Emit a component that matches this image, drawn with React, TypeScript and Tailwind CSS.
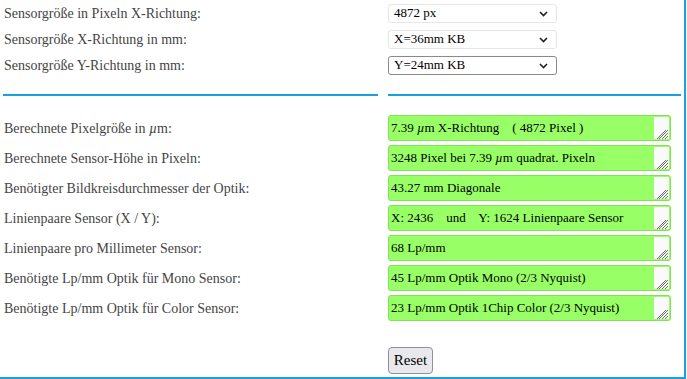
import React from 'react';

const selects = [
  { label: 'Sensorgröße in Pixeln X-Richtung:', value: '4872 px', focused: false },
  { label: 'Sensorgröße X-Richtung in mm:', value: 'X=36mm KB', focused: false },
  { label: 'Sensorgröße Y-Richtung in mm:', value: 'Y=24mm KB', focused: true },
];

const results: { label: React.ReactNode; value: React.ReactNode }[] = [
  {
    label: <>Berechnete Pixelgröße in <i>µ</i>m:</>,
    value: <>7.39 <i>µ</i>m X-Richtung    ( 4872 Pixel )</>,
  },
  {
    label: 'Berechnete Sensor-Höhe in Pixeln:',
    value: <>3248 Pixel bei 7.39 <i>µ</i>m quadrat. Pixeln</>,
  },
  { label: 'Benötigter Bildkreisdurchmesser der Optik:', value: '43.27 mm Diagonale' },
  { label: 'Linienpaare Sensor (X / Y):', value: 'X: 2436    und    Y: 1624 Linienpaare Sensor' },
  { label: 'Linienpaare pro Millimeter Sensor:', value: '68 Lp/mm' },
  { label: 'Benötigte Lp/mm Optik für Mono Sensor:', value: '45 Lp/mm Optik Mono (2/3 Nyquist)' },
  { label: 'Benötigte Lp/mm Optik für Color Sensor:', value: '23 Lp/mm Optik 1Chip Color (2/3 Nyquist)' },
];

// scrollbar track + resize handle in the textarea corner
function Grip() {
  return (
    <div className="absolute right-[1px] top-[1px] bottom-[1px] flex w-[15px] flex-col">
      <div className="flex-1 bg-[#fafafa]" />
      <svg width="15" height="10" viewBox="0 0 15 10" className="bg-[#fafafa]">
        <path d="M14 1 L5 10 M14 4 L8 10 M14 7 L11 10 M12 1 L3 10" stroke="#6b6b6b" strokeWidth="1" />
      </svg>
    </div>
  );
}

export default function App() {
  return (
    <div className="h-[379px] w-[686px] overflow-hidden border-r-2 border-b-2 border-[#1a9fe0] bg-white font-['Liberation_Serif','Times_New_Roman',serif] text-[14px] text-[#444]">
      {selects.map((s) => (
        <div key={s.value} className="flex h-[26px] items-center">
          <div className="w-[385px] pl-[4px]">{s.label}</div>
          <div className="pl-[3px]">
            <div
              className={`relative flex h-[19px] w-[169px] items-center rounded-[3px] border bg-white pl-[5px] text-[13px] text-black ${
                s.focused ? 'border-[#8a8a8a]' : 'border-[#e6e6e6]'
              }`}
            >
              {s.value}
              <svg className="absolute right-[8px] top-[6px]" width="9" height="6" viewBox="0 0 9 6">
                <path d="M1 1 L4.5 4.5 L8 1" stroke="#222" strokeWidth="1.6" fill="none" />
              </svg>
            </div>
          </div>
        </div>
      ))}

      <div className="mt-[16px] flex">
        <div className="w-[385px] pl-[3px]">
          <div className="h-[2px] w-[375px] bg-[#1a9fe0]" />
        </div>
        <div className="pl-[3px]">
          <div className="h-[2px] w-[293px] bg-[#1a9fe0]" />
        </div>
      </div>

      <div className="mt-[19px] flex flex-col gap-[4px]">
        {results.map((r, i) => (
          <div key={i} className="flex h-[26px] items-center">
            <div className="w-[385px] pl-[4px]">{r.label}</div>
            <div className="pl-[3px]">
              <div className="relative flex h-[26px] w-[283px] items-center rounded-[3px] border border-[#82e05a] bg-[#99ff66] pl-[2px] text-[13px] text-black">
                <span className="whitespace-pre">{r.value}</span>
                <Grip />
              </div>
            </div>
          </div>
        ))}
      </div>

      <div className="mt-[26px] flex">
        <div className="w-[385px]" />
        <div className="pl-[3px]">
          <button className="h-[27px] w-[45px] rounded-[4px] border border-[#8f8f9d] bg-[#e9e9ed] text-[15px] text-black">
            Reset
          </button>
        </div>
      </div>
    </div>
  );
}
